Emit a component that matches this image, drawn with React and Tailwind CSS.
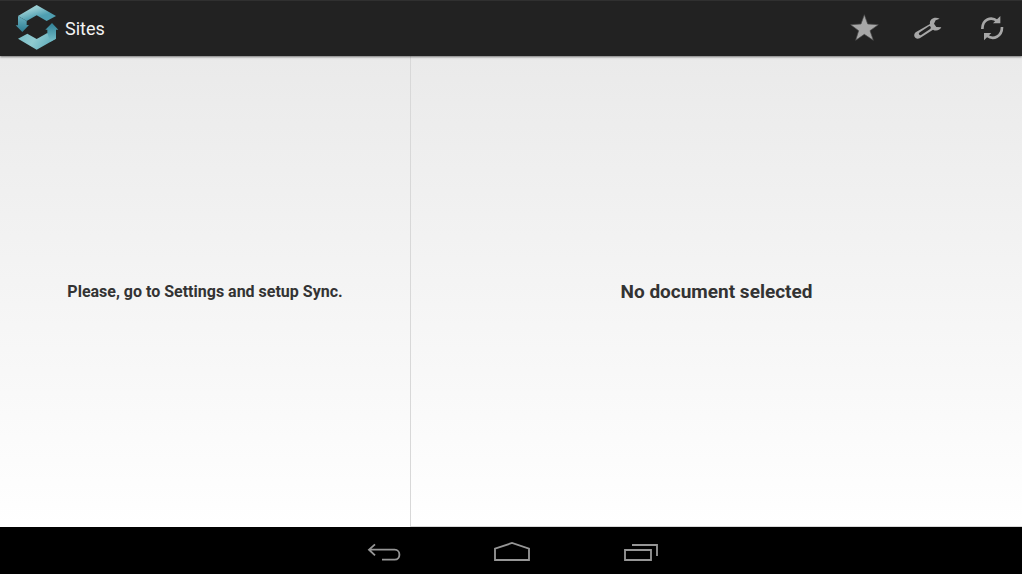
function Logo() {
  return (
    <svg viewBox="36 3 144 168" className="h-14 w-12 shrink-0" aria-hidden="true">
      <defs>
        <linearGradient id="top" x1="0.1" y1="0" x2="0.6" y2="0.7">
          <stop offset="0" stopColor="#a9d6d9" />
          <stop offset="0.45" stopColor="#94cbd1" />
          <stop offset="1" stopColor="#4f9fb1" />
        </linearGradient>
        <linearGradient id="bottom" x1="0" y1="0" x2="1" y2="0.3">
          <stop offset="0" stopColor="#76bbc5" />
          <stop offset="0.5" stopColor="#90cad0" />
          <stop offset="1" stopColor="#61adbc" />
        </linearGradient>
        <linearGradient id="down" x1="0" y1="0" x2="0" y2="1">
          <stop offset="0" stopColor="#6cb2c0" />
          <stop offset="1" stopColor="#2c7c92" />
        </linearGradient>
        <linearGradient id="up" x1="0" y1="0" x2="0" y2="1">
          <stop offset="0" stopColor="#2f8096" />
          <stop offset="1" stopColor="#75bdc7" />
        </linearGradient>
      </defs>
      <path d="M54 48 110 15 168 48 140 63 110 46 80 63Z" fill="url(#top)" />
      <path d="M54 48 80 63V75H87L67 96 47 76H54Z" fill="url(#down)" />
      <path d="M54 116 82 101 110 117 142 99 168 116 110 149Z" fill="url(#bottom)" />
      <path d="M142 99V89H136L156 69 175 89H168V116L151 125Z" fill="url(#up)" />
    </svg>
  );
}

function ActionButton({ label, children }) {
  return (
    <button type="button" aria-label={label} className="size-[50px]">
      <svg viewBox="0 0 150 150" className="size-full" aria-hidden="true">{children}</svg>
    </button>
  );
}

function NavButton({ label, viewBox, children }) {
  return (
    <button type="button" aria-label={label} className="flex w-32 justify-center">
      <svg viewBox={viewBox} className="h-[47px] w-10" fill="none" stroke="#969696" strokeWidth="5.5" aria-hidden="true">
        {children}
      </svg>
    </button>
  );
}

export default function App() {
  return (
    <div className="flex min-h-screen flex-col bg-black font-[Roboto,sans-serif] text-[#333333]">
      <header className="z-10 flex h-14 items-center border-t border-t-[#303030] bg-[#222222] pt-px pr-1 pl-3 shadow-[0_1px_2px_rgba(0,0,0,0.5)]">
        <Logo />
        <h1 className="pl-[5px] text-lg text-[#f3f3f3]">Sites</h1>
        <div className="ml-auto flex gap-[14px]">
          <ActionButton label="Favorites">
            <path d="M73 32 83 60 115 62 90 80 100 109 73 91 47 109 56 80 32 62 63 60Z" fill="#a7a7a7" stroke="#4b4b4b" strokeWidth="2" />
          </ActionButton>
          <ActionButton label="Settings">
            <path d="M107 44C92 36 75 45 78 60L35 85C25 94 34 109 47 103L87 77C96 83 109 78 112 70L97 69 90 59 95 49Z" fill="#a7a7a7" />
            <path d="M49 89 76 71" stroke="#222222" strokeWidth="9" strokeLinecap="round" />
          </ActionButton>
          <ActionButton label="Refresh">
            <g fill="none" stroke="#a7a7a7" strokeWidth="8">
              <path d="M43 75C43 46 69 36 88 51" />
              <path d="M102 69C102 98 76 109 57 95" />
            </g>
            <path d="M97 36V58H75ZM48 109V87H70Z" fill="#a7a7a7" />
          </ActionButton>
        </div>
      </header>

      <main className="grid flex-1 grid-cols-[205fr_306fr] bg-linear-to-b from-[#eaeaea] to-white text-center font-bold">
        <section className="flex items-center justify-center">
          <p className="text-base">Please, go to Settings and setup Sync.</p>
        </section>
        <section className="flex items-center justify-center border-b border-l border-[#d8d8d8] pt-0.5">
          <p className="text-[19px] leading-7">No document selected</p>
        </section>
      </main>

      <nav aria-label="System" className="flex h-[47px] justify-center bg-black">
        <NavButton label="Back" viewBox="9 36 120 141">
          <path d="M45 88 27 104 45 121M28 104H104C123 104 123 134 104 134H66" />
        </NavButton>
        <NavButton label="Home" viewBox="393 36 120 141">
          <path d="M405 135V101L456 84 507 101V135Z" />
        </NavButton>
        <NavButton label="Recent apps" viewBox="777 36 120 141">
          <path d="M795 105H873V135H795ZM816 90H891V123" />
        </NavButton>
      </nav>
    </div>
  );
}
